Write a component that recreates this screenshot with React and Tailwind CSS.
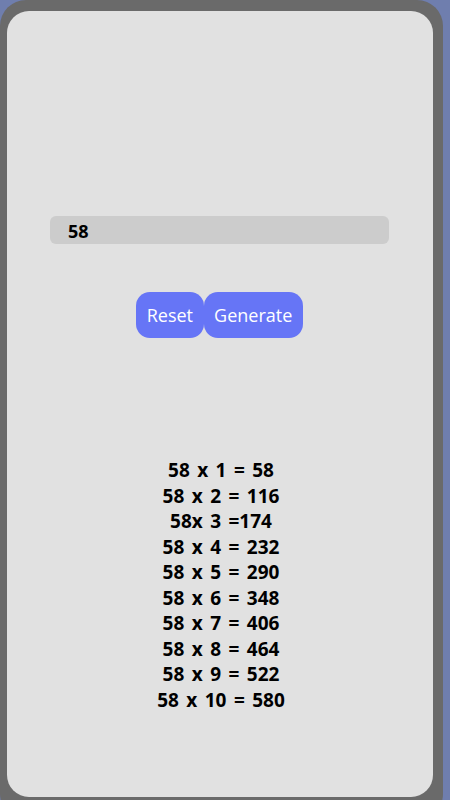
export default function App() {
  const n = 58;
  const lines = [
    "58 x 1 = 58",
    "58 x 2 = 116",
    "58x 3 =174",
    "58 x 4 = 232",
    "58 x 5 = 290",
    "58 x 6 = 348",
    "58 x 7 = 406",
    "58 x 8 = 464",
    "58 x 9 = 522",
    "58 x 10 = 580",
  ];
  return (
    <div className="w-[450px] h-[800px] overflow-hidden bg-[#6f7eae]" style={{ fontFamily: '"Open Sans", "Noto Sans", sans-serif' }}>
      <div className="w-[443px] h-[820px] bg-[#6a6a6a] rounded-[26px] pl-[7px] pr-[10px] pt-[11px] pb-[23px]">
        <div className="h-full bg-[#e1e1e1] rounded-[22px] flex flex-col items-center pt-[205px]">
          <div className="w-[339px] h-[28px] bg-[#cccccc] rounded-[6px] flex items-center pl-[18px] -ml-[1px]">
            <span className="text-[18px] font-bold text-black leading-none mt-[2px]">{n}</span>
          </div>
          <div className="flex mt-[48px] -ml-[1px]">
            <button className="h-[46px] px-[10.5px] bg-[#6675f6] rounded-[14px] text-white text-[18px] leading-none">Reset</button>
            <button className="h-[46px] px-[10.5px] bg-[#6675f6] rounded-[14px] text-white text-[18px] leading-none">Generate</button>
          </div>
          <div className="mt-[120px] flex flex-col items-center ml-[2px]">
            {lines.map((l, i) => (
              <div key={i} className="text-[19px] font-bold text-black leading-[25.5px] whitespace-pre [word-spacing:2.5px]">{l}</div>
            ))}
          </div>
        </div>
      </div>
    </div>
  );
}
